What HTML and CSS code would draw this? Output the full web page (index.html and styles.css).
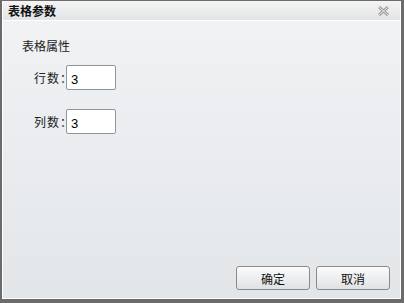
FILE: index.html
```html
<!DOCTYPE html>
<html lang="zh">
<head>
  <meta charset="UTF-8" />
  <title>表格参数</title>
  <link rel="stylesheet" href="styles.css">
</head>
<body>
  <div class="dialog">
    <div class="inner">
      <div class="titlebar">
        <span class="title">表格参数</span>
        <svg class="close" width="11" height="10" viewBox="0 0 11 10">
          <path d="M1 1 L10 9 M10 1 L1 9" stroke="#9a9a9a" stroke-width="3" fill="none"/>
          <path d="M1 1 L10 9 M10 1 L1 9" stroke="#ededed" stroke-width="1" fill="none"/>
        </svg>
      </div>
      <div class="content">
        <div class="section">表格属性</div>
        <div class="row">
          <label>行数：</label>
          <input type="text" value="3" />
        </div>
        <div class="row">
          <label>列数：</label>
          <input type="text" value="3" />
        </div>
      </div>
      <div class="footer">
        <button>确定</button>
        <button>取消</button>
      </div>
    </div>
  </div>
</body>
</html>
```

FILE: styles.css
```css
body {
  margin: 0;
  font-family: "Liberation Sans", "Noto Sans CJK SC", sans-serif;
  font-size: 12px;
  color: #222;
}
.dialog {
  width: 404px;
  height: 303px;
  box-sizing: border-box;
  background: #6b6b6b;
  padding: 1px 3px 4px 2px;
}
.inner {
  height: 100%;
  box-sizing: border-box;
  border: 1px solid #fff;
  border-top: none;
  display: flex;
  flex-direction: column;
  background: linear-gradient(to bottom, #f1f3f5, #e3e6e9);
}
.titlebar {
  height: 19px;
  display: flex;
  align-items: center;
  justify-content: space-between;
  padding: 0 11px 0 5px;
  background: linear-gradient(to bottom, #f4f4f4, #e2e4e6);
  border-bottom: 1px solid #fff;
}
.title {
  font-weight: bold;
  font-size: 12px;
  color: #111;
}
.close {
  display: block;
}
.content {
  flex: 1;
  padding: 19px 0 0 19px;
}
.section {
  line-height: 14px;
  margin-bottom: 11px;
}
.row {
  display: flex;
  align-items: center;
  padding-left: 12px;
  margin-bottom: 19px;
}
.row label {
  width: 32px;
  white-space: nowrap;
  letter-spacing: 1px;
}
.row input {
  position: relative;
  width: 50px;
  height: 25px;
  box-sizing: border-box;
  border: 1px solid #8f969c;
  border-radius: 2px;
  background: #fff;
  padding: 3px 4px 0;
  font-family: "Liberation Sans", sans-serif;
  font-size: 13px;
  color: #000;
}
.footer {
  display: flex;
  justify-content: flex-end;
  gap: 6px;
  padding: 0 10px 8px 0;
}
.footer button {
  width: 74px;
  height: 24px;
  border: 1px solid #8a8a8a;
  border-radius: 3px;
  background: linear-gradient(to bottom, #fbfbfb, #dfe2e5);
  font-family: "Liberation Sans", "Noto Sans CJK SC", sans-serif;
  font-size: 12px;
  color: #111;
}
```
